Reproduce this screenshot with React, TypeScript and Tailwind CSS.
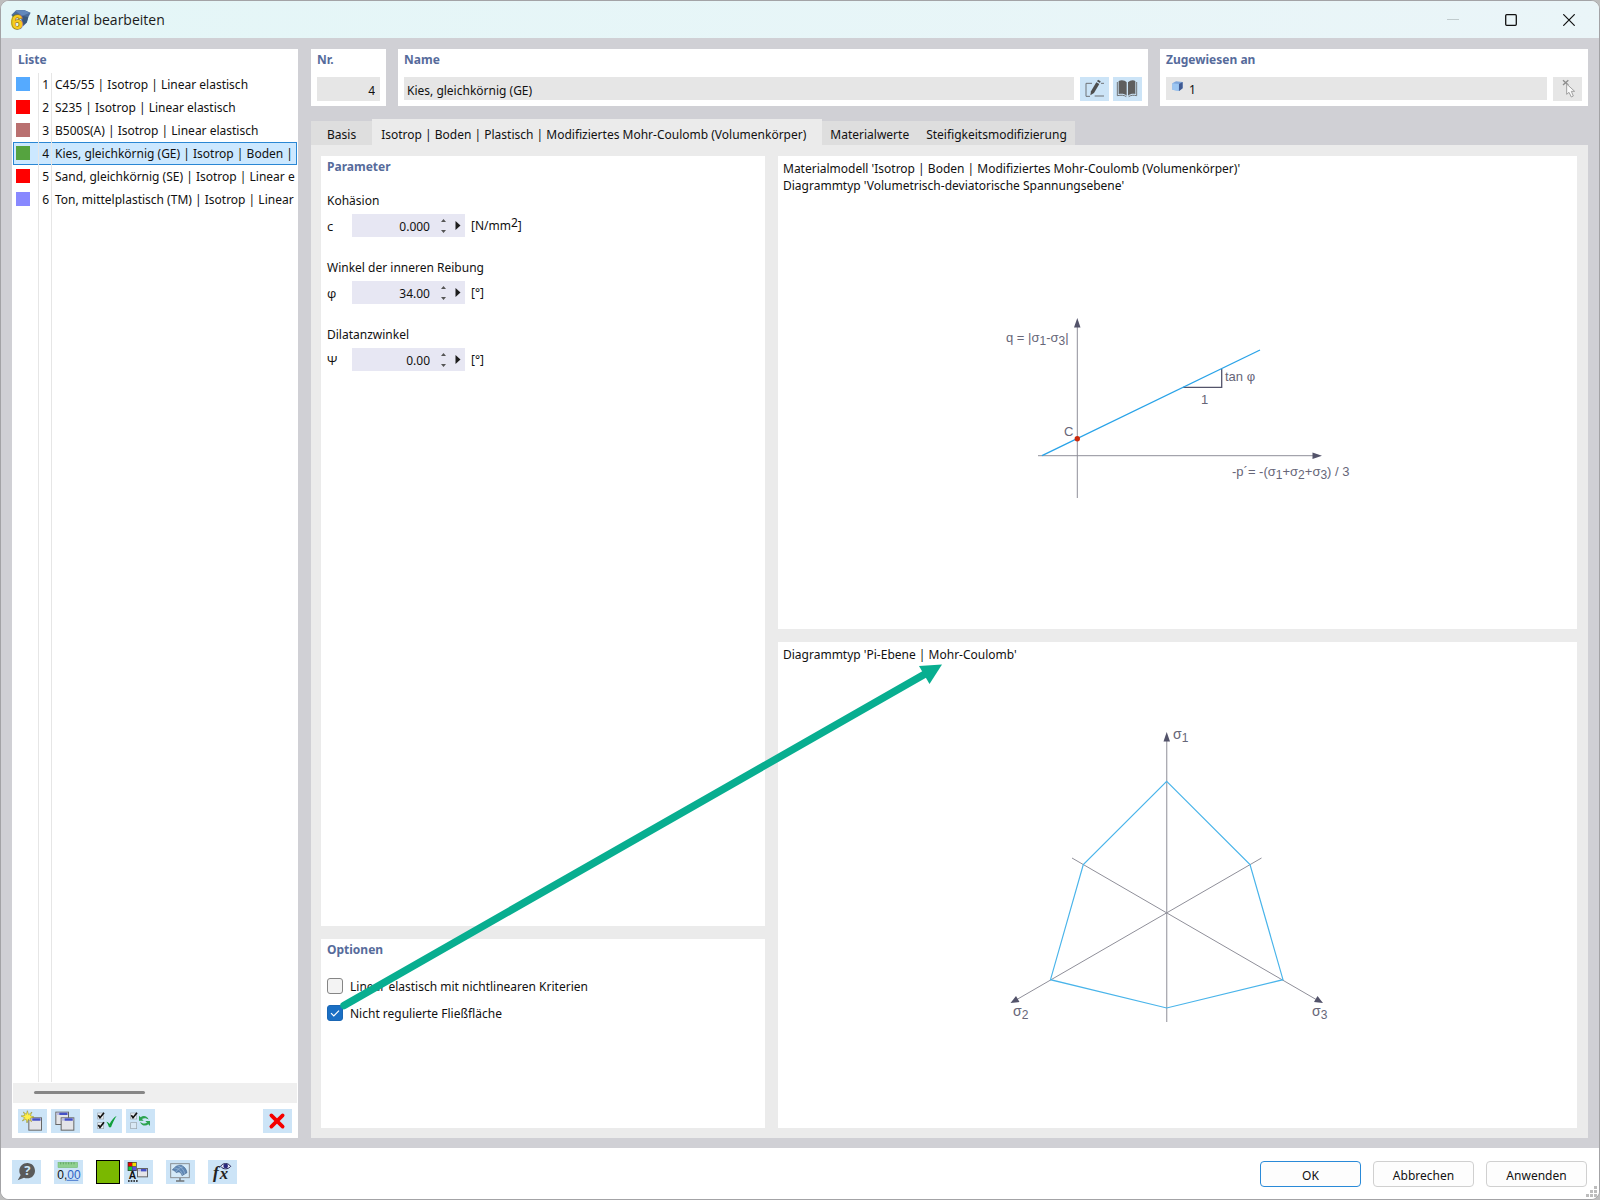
import { useState } from "react";
import type { ReactNode } from "react";
import clsx from "clsx";

const materials = [
  { id: 1, swatch: "bg-[#55aaff]", name: "C45/55 | Isotrop | Linear elastisch" },
  { id: 2, swatch: "bg-[#ff0000]", name: "S235 | Isotrop | Linear elastisch" },
  { id: 3, swatch: "bg-[#b97070]", name: "B500S(A) | Isotrop | Linear elastisch" },
  { id: 4, swatch: "bg-[#55a33f]", name: "Kies, gleichkörnig (GE) | Isotrop | Boden |" },
  { id: 5, swatch: "bg-[#ff0000]", name: "Sand, gleichkörnig (SE) | Isotrop | Linear e" },
  { id: 6, swatch: "bg-[#8888ff]", name: "Ton, mittelplastisch (TM) | Isotrop | Linear" },
];

const tabs = [
  { label: "Basis", className: "px-4" },
  { label: "Isotrop | Boden | Plastisch | Modifiziertes Mohr-Coulomb (Volumenkörper)", className: "pr-4 pl-[9px]" },
  { label: "Materialwerte", className: "px-2" },
  { label: "Steifigkeitsmodifizierung", className: "pr-2 pl-[9px]" },
];

const parameters = [
  { id: "cohesion", title: "Kohäsion", symbol: "c", value: "0.000", unit: <>[N/mm<span className="align-[3px] leading-none">2</span>]</> },
  { id: "friction", title: "Winkel der inneren Reibung", symbol: "φ", value: "34.00", unit: "[°]" },
  { id: "dilatancy", title: "Dilatanzwinkel", symbol: "Ψ", value: "0.00", unit: "[°]" },
];

function Heading({ children }: { children: ReactNode }) {
  return <h2 className="px-[6px] leading-[22px] font-bold text-[#566b9b]">{children}</h2>;
}

function IconButton({ label, disabled, children }: { label: string; disabled?: boolean; children: ReactNode }) {
  return (
    <button
      title={label}
      aria-label={label}
      disabled={disabled}
      className={clsx("h-6 w-[29px] shrink-0", disabled ? "bg-[#e6e6e6]" : "bg-[#cce4f7] hover:bg-[#b8daf5]")}
    >
      <svg viewBox="0 0 87 72" className="block h-6 w-[29px]">{children}</svg>
    </button>
  );
}

// Small window glyph used by several toolbar icons
function MiniWindow({ x, y, w = 41, h = 40 }: { x: number; y: number; w?: number; h?: number }) {
  return (
    <g>
      <rect x={x + 1.5} y={y + 1.5} width={w - 3} height={h - 3} fill="#e4e4e8" stroke="#666" strokeWidth="3" />
      <rect x={x + 3} y={y + 3} width={w - 6} height="7" fill="#b9bce0" />
      <rect x={x + 12} y={y + 3} width={w - 17} height="7" fill="#4450c6" />
    </g>
  );
}

function CheckedBox({ y }: { y: number }) {
  return (
    <g>
      <rect x="14" y={y + 1} width="18" height="18" fill="#e8eef3" stroke="#9aa3aa" strokeWidth="2" />
      <path d={`M16 ${y + 8} L21 ${y + 15} L33 ${y}`} fill="none" stroke="#111" strokeWidth="5" />
    </g>
  );
}

function AppIcon() {
  return (
    <svg viewBox="28 26 62 62" className="h-[21px] w-[21px] overflow-visible">
      <path d="M32 44 L46 30 L70 29 L89 37 L82 50 L78 66 L66 78 L60 52 L38 52 Z" fill="#4a6c9b" />
      <path d="M44 32 L70 29 L86 38 L64 46 Z" fill="#6288bb" />
      <path d="M64 46 L82 50 L77 66 L66 74 Z" fill="#3a5879" />
      <text x="32" y="86" fontSize="62" fontWeight="bold" fill="#f7ca1e" stroke="#8a7326" strokeWidth="4" paintOrder="stroke" className="font-['Liberation_Sans']">6</text>
    </svg>
  );
}

function TitleBar() {
  return (
    <header className="flex h-[37px] items-center gap-[5px] bg-linear-to-r from-[#e4f6f7] to-[#eaf5f8] pr-px pl-[9px] font-['Open_Sans'] text-[14px] text-[#1a1a1a]">
      <AppIcon />
      <h1 className="flex-1">Material bearbeiten</h1>
      <div className="flex">
        <button aria-label="Minimieren" disabled className="flex h-9 w-[58px] items-center justify-center">
          <svg viewBox="0 0 12 12" className="h-3 w-3"><path d="M0 5.5H12" stroke="#c0cbcd" /></svg>
        </button>
        <button aria-label="Maximieren" className="flex h-9 w-[58px] items-center justify-center">
          <svg viewBox="0 0 12 12" className="h-3 w-3"><rect x=".7" y=".7" width="10.6" height="10.6" rx="1" fill="none" stroke="#111" strokeWidth="1.3" /></svg>
        </button>
        <button aria-label="Schließen" className="flex h-9 w-[58px] items-center justify-center">
          <svg viewBox="0 0 12 12" className="h-3 w-3"><path d="M.3 .3 11.7 11.7M11.7 .3 .3 11.7" stroke="#111" strokeWidth="1.2" /></svg>
        </button>
      </div>
    </header>
  );
}

function MaterialList({ selected, onSelect }: { selected: number; onSelect: (id: number) => void }) {
  return (
    <aside className="flex flex-col bg-white">
      <Heading>Liste</Heading>
      <div className="mx-px mt-[2px] flex flex-1 flex-col">
        {materials.map((m) => (
          <button
            key={m.id}
            onClick={() => onSelect(m.id)}
            className={clsx(
              "flex h-[23px] w-full items-stretch border text-left",
              m.id === selected ? "border-[#2a87d4] bg-[#cce8ff]" : "border-transparent"
            )}
          >
            <span className="-my-px flex w-[25px] shrink-0 items-center border-r border-[#e6e6e6] pl-[2px]">
              <span className={clsx("mb-px h-[14px] w-[14px]", m.swatch)} />
            </span>
            <span className="-my-px w-[13px] shrink-0 border-r border-[#e6e6e6] pr-[2px] text-right leading-6">{m.id}</span>
            <span className="-my-px flex-1 overflow-hidden pl-[3px] leading-6 whitespace-nowrap">{m.name}</span>
          </button>
        ))}
        <div className="flex flex-1 pl-px">
          <div className="w-[25px] border-r border-[#e6e6e6]" />
          <div className="w-[13px] border-r border-[#e6e6e6]" />
        </div>
        <div className="mt-px flex h-5 items-center bg-[#efefef] pb-[2px] pl-[21px]">
          <div className="h-[3px] w-[111px] rounded-full bg-[#868686]" />
        </div>
      </div>
      <div className="flex gap-1 px-[6px] pt-[6px] pb-[5px]">
        <IconButton label="Neu">
          <MiniWindow x={31} y={25} />
          <path d="M28 5 L32 17 L42 9 L37 20 L48 24 L36 28 L41 38 L31 31 L27 42 L24 30 L13 36 L20 26 L9 21 L21 19 L16 9 L25 16 Z" fill="#fff04a" stroke="#8c8420" strokeWidth="1.5" />
        </IconButton>
        <IconButton label="Kopieren">
          <MiniWindow x={13} y={8} />
          <MiniWindow x={29} y={25} />
        </IconButton>
        <div className="w-[5px]" />
        <IconButton label="Alle auswählen">
          <CheckedBox y={11} />
          <CheckedBox y={40} />
          <path d="M40 38 C45 39 48 42 50 45 C54 36 60 27 71 20 C64 31 58 43 54 55 L48 55 C46 48 44 43 40 38 Z" fill="#12a03c" />
        </IconButton>
        <IconButton label="Auswahl umkehren">
          <CheckedBox y={11} />
          <rect x="14" y="41" width="18" height="18" fill="#d9e8f4" stroke="#9aa3aa" strokeWidth="2" />
          <path d="M39 20 L39 35 L53 35 L48 30 C54 26 62 27 68 32 C64 21 52 18 44 25 Z" fill="#2da350" />
          <path d="M72 51 L72 36 L58 36 L63 41 C57 45 48 44 42 38 C46 50 59 53 67 46 Z" fill="#2da350" />
        </IconButton>
        <div className="flex-1" />
        <IconButton label="Löschen">
          <path d="M25 19 L59 53 M59 19 L25 53" stroke="#f50000" strokeWidth="11" strokeLinecap="round" />
        </IconButton>
      </div>
    </aside>
  );
}

function HeaderFields() {
  return (
    <div className="flex gap-3">
      <section className="w-[75px] bg-white pb-[5px]">
        <Heading><label htmlFor="nr">Nr.</label></Heading>
        <div className="mt-[6px] flex px-[6px]">
          <input id="nr" readOnly defaultValue="4" className="h-6 w-full bg-[#e6e6e6] pt-[2px] pr-[5px] text-right outline-none" />
        </div>
      </section>
      <section className="min-w-0 flex-[750] bg-white pb-[5px]">
        <Heading><label htmlFor="name">Name</label></Heading>
        <div className="mt-[6px] flex gap-1 px-[6px]">
          <input id="name" readOnly defaultValue="Kies, gleichkörnig (GE)" className="mr-[2px] h-[23px] min-w-0 flex-1 bg-[#e6e6e6] pt-[3px] pl-[3px] outline-none" />
          <IconButton label="Bearbeiten">
            <path d="M36 19 H18 V58 H30" fill="none" stroke="#6f7377" strokeWidth="3" />
            <path d="M63 19 H72 M44 57 H72" stroke="#6f7377" strokeWidth="3" />
            <path d="M31 55 L33 43 L49 16 L58 21 L42 48 Z" fill="#4e4e4e" />
            <path d="M51 13 L54 8 L62 13 L60 18 Z" fill="#4e4e4e" />
          </IconButton>
          <IconButton label="Bibliothek">
            <path d="M17 12 C26 8 36 10 41 16 V56 C35 50 26 49 17 51 Z M45 16 C51 10 60 8 67 12 V51 C60 49 52 50 45 56 Z" fill="#5e5e5e" />
            <path d="M13 15 V56 C24 54 33 54 40 59 M71 15 V56 C62 54 54 54 47 59" fill="none" stroke="#5e5e5e" strokeWidth="2.500" />
          </IconButton>
        </div>
      </section>
      <section className="min-w-0 flex-[428] bg-white pb-[5px]">
        <Heading><label htmlFor="assigned">Zugewiesen an</label></Heading>
        <div className="mt-[6px] flex gap-[6px] px-[6px]">
          <div className="flex h-[23px] min-w-0 flex-1 bg-[#e6e6e6] pl-[6px]">
            <svg viewBox="0 0 30 30" className="mt-[4px] h-[11px] w-[11px]">
              <path d="M1 6 L11 1 L29 3 L29 20 L20 27 L1 24 Z" fill="#7ea6da" />
              <path d="M1 6 L19 8 V27 L1 24 Z" fill="#9cc6f2" />
              <path d="M19 8 L29 3 V20 L19 27 Z" fill="#405a92" />
            </svg>
            <input id="assigned" readOnly defaultValue="1" className="min-w-0 flex-1 pt-[3px] pl-[6px] outline-none" />
          </div>
          <IconButton label="Auswahl" disabled>
            <path d="M30 10 L46 24 M46 10 L30 24" stroke="#8d8d8d" strokeWidth="4" />
            <path d="M41 21 V52 L48 46 L55 60 L61 57 L55 43 L65 43 Z" fill="#fafafa" stroke="#a0a0a0" strokeWidth="3" />
          </IconButton>
        </div>
      </section>
    </div>
  );
}

function ParameterPanel() {
  return (
    <section className="bg-white">
      <Heading>Parameter</Heading>
      <div className="mt-3 flex flex-col gap-5 px-[6px]">
        {parameters.map((p) => (
          <div key={p.id}>
            <label htmlFor={p.id} className="block leading-[22px]">{p.title}</label>
            <div className="mt-[2px] flex h-[23px]">
              <span className="w-[25px] font-['Open_Sans'] text-[13px] leading-6">{p.symbol}</span>
              <div className="flex h-[23px] w-[113px] items-center bg-[#e7e7f3]">
                <input id={p.id} defaultValue={p.value} className="h-full w-[78px] pt-[2px] text-right outline-none" />
                <svg viewBox="0 0 35 23" className="h-[23px] w-[35px]">
                  <path d="M11 8 L13.500 5 L16 8 Z M11 16 L13.500 19 L16 16 Z" fill="#555" />
                  <path d="M25.500 7 L30.500 11.500 L25.500 16 Z" fill="#1d1d1d" />
                </svg>
              </div>
              <span className="ml-[6px] leading-6">{p.unit}</span>
            </div>
          </div>
        ))}
      </div>
    </section>
  );
}

function Option({ id, label, checked }: { id: string; label: string; checked?: boolean }) {
  return (
    <div className="flex h-[27px] items-center gap-[7px]">
      <span className="relative h-4 w-4">
        <input
          id={id}
          type="checkbox"
          defaultChecked={checked}
          className="peer block h-4 w-4 appearance-none rounded-[3px] border border-[#858585] bg-[#f3f3f3] checked:border-[#1a66b4] checked:bg-[#1a6fc4]"
        />
        <svg viewBox="0 0 16 16" className="pointer-events-none absolute inset-0 hidden h-4 w-4 peer-checked:block">
          <path d="M4 8.200 L6.800 11 L12 5.600" fill="none" stroke="#fff" strokeWidth="1.200" />
        </svg>
      </span>
      <label htmlFor={id} className="pt-[2px]">{label}</label>
    </div>
  );
}

function OptionsPanel() {
  return (
    <section className="bg-white">
      <Heading>Optionen</Heading>
      <div className="mt-[11px] px-[6px]">
        <Option id="linear" label="Linear elastisch mit nichtlinearen Kriterien" />
        <Option id="unregulated" label="Nicht regulierte Fließfläche" checked />
      </div>
    </section>
  );
}

// σ with an index; text after it goes back up to the baseline
function Sigma({ n, after }: { n: number; after?: string }) {
  return (
    <>
      σ<tspan dy="3" fontSize="12">{n}</tspan>
      {after && <tspan dy="-3">{after}</tspan>}
    </>
  );
}

function StressPlaneDiagram() {
  return (
    <svg viewBox="978 312 400 200" className="h-[200px] w-[400px] font-['Liberation_Sans'] text-[13px]" fill="#666678">
      <path d="M1077.300 325 V498 M1038 455.700 H1314" stroke="#8f8f99" />
      <path d="M1077.300 318 L1080.500 327.500 H1074 Z M1322 455.700 L1312.500 452.500 V459 Z" fill="#53536a" />
      <path d="M1183 387.300 H1221.700 V369" fill="none" stroke="#53536a" strokeWidth="1.300" />
      <path d="M1042 455.700 L1260 350" stroke="#29a3e8" strokeWidth="1.300" />
      <circle cx="1077.300" cy="438.700" r="2.700" fill="#cc2a0c" />
      <text x="1006" y="342">q = |<Sigma n={1} after="-" /><Sigma n={3} after="|" /></text>
      <text x="1064" y="436">C</text>
      <text x="1225" y="381">tan φ</text>
      <text x="1201" y="404">1</text>
      <text x="1232" y="476">-p´= -(<Sigma n={1} after="+" /><Sigma n={2} after="+" /><Sigma n={3} after=") / 3" /></text>
    </svg>
  );
}

function PiPlaneDiagram() {
  return (
    <svg viewBox="978 716 400 360" className="h-[360px] w-[400px] font-['Liberation_Sans'] text-[14px]" fill="#666678">
      <path d="M1166.700 738 V1022" stroke="#a8a8b0" strokeWidth="1.300" />
      <path d="M1261.500 858 L1016 1000 M1072 858 L1317 1000" stroke="#8f8f99" />
      <path d="M1166.700 732 L1170 741.500 H1163.500 Z M1010.500 1003 L1016 996 L1019.500 1002 Z M1323 1003 L1317.500 996 L1314 1002 Z" fill="#53536a" />
      <path d="M1166.700 781.300 L1250 864.500 L1283 979.700 L1166.700 1008 L1050.500 979.700 L1083.300 864.500 Z" fill="none" stroke="#49b4ea" strokeWidth="1.200" />
      <text x="1173" y="739"><Sigma n={1} /></text>
      <text x="1013" y="1016"><Sigma n={2} /></text>
      <text x="1312" y="1016"><Sigma n={3} /></text>
    </svg>
  );
}

function DiagramPanel({ lines, children }: { lines: string[]; children: ReactNode }) {
  return (
    <section className="flex flex-col bg-white">
      <div className="px-[5px] pt-1">
        {lines.map((line) => (
          <p key={line} className="leading-[17px]">{line}</p>
        ))}
      </div>
      <div className="flex flex-1 items-center justify-center">{children}</div>
    </section>
  );
}

function Footer() {
  return (
    <footer className="relative flex h-[51px] items-start bg-white pt-3 pr-3 pl-[11px]">
      <div className="flex flex-1 gap-[13px]">
        <IconButton label="Hilfe">
          <path d="M46 9 C60 9 69 20 69 32 C69 45 59 55 46 55 C42 55 39 54 36 53 L17 61 L26 45 C23 41 22 37 22 32 C22 19 33 9 46 9 Z" fill="#5a5a5a" />
          <text x="46" y="46" textAnchor="middle" fontSize="39" fontWeight="bold" fill="#cce4f7">?</text>
        </IconButton>
        <IconButton label="Einheiten">
          <rect x="12" y="7" width="59" height="16" fill="#8fd08f" stroke="#6cb56c" strokeWidth="1.500" />
          <path d="M20 7 V13 M28 7 V13 M36 7 V13 M44 7 V13 M52 7 V13 M60 7 V13" stroke="#4c8f4c" strokeWidth="2" />
          <text x="10" y="56" fontSize="36" fill="#111" className="font-['Liberation_Sans']">0,<tspan fill="#2d62c4">00</tspan></text>
          <path d="M38 61 H73" stroke="#2d62c4" strokeWidth="2.500" />
        </IconButton>
        <div className="flex gap-1">
          <button aria-label="Farbe" className="h-6 w-6 border border-black bg-[#7ab800]" />
          <IconButton label="Darstellung">
            <rect x="11" y="6" width="27" height="27" fill="#333" />
            <rect x="13" y="8" width="11" height="11" fill="#e00" />
            <rect x="25" y="8" width="11" height="11" fill="#f5dc00" />
            <rect x="13" y="20" width="11" height="11" fill="#12c83c" />
            <rect x="25" y="20" width="11" height="11" fill="#5a4de0" />
            <text x="14" y="58" fontSize="31" fontWeight="bold" fill="#111" className="font-['Liberation_Sans']">A</text>
            <path d="M12 63 H42" stroke="#111" strokeWidth="4" strokeDasharray="5 3" />
            <MiniWindow x={39} y={24} w={33} h={28} />
          </IconButton>
        </div>
        <IconButton label="Anzeige">
          <rect x="14" y="11" width="56" height="42" fill="#d4e9f8" stroke="#8a8f94" strokeWidth="3" />
          <path d="M42 54 V62 M30 63 H55" stroke="#6f7377" strokeWidth="4" />
          <path d="M19 30 C27 19 36 14 46 16 C56 20 62 29 63 38 L48 47 C46 38 40 33 31 38 C28 34 24 31 19 30 Z" fill="#5f87b5" stroke="#36567c" strokeWidth="1.500" />
          <path d="M24 24 C36 24 46 32 50 46 M34 17 C46 20 54 30 57 43 M30 36 C34 28 42 22 52 20" fill="none" stroke="#b7cfe6" strokeWidth="1.500" />
        </IconButton>
        <IconButton label="Formel">
          <text x="15" y="55" fontSize="52" fontStyle="italic" fontWeight="bold" fill="#222" className="font-['Liberation_Serif']">f</text>
          <text x="35" y="58" fontSize="50" fontStyle="italic" fontWeight="bold" fill="#222" className="font-['Liberation_Serif']">x</text>
          <path d="M38 19 C44 8 61 8 68 19 C61 29 45 29 38 19 Z" fill="#e8e8f8" stroke="#1d1d50" strokeWidth="3" />
          <circle cx="53" cy="18" r="7" fill="#28287c" />
        </IconButton>
      </div>
      <div className="flex gap-3 pt-px">
        <button className="h-[26px] w-[101px] rounded-[4px] border border-[#2a8ad8] bg-[#fdfdfd] pt-[3px]">OK</button>
        <button className="h-[26px] w-[101px] rounded-[4px] border border-[#d0d0d0] bg-[#fdfdfd] pt-[3px]">Abbrechen</button>
        <button className="h-[26px] w-[101px] rounded-[4px] border border-[#d0d0d0] bg-[#fdfdfd] pt-[3px]">Anwenden</button>
      </div>
      <svg viewBox="0 0 11 11" className="absolute right-[2px] bottom-[2px] h-[11px] w-[11px]" fill="#bdbdbd">
        <path d="M8 0h3v3h-3z M4 4h3v3h-3z M8 4h3v3h-3z M0 8h3v3h-3z M4 8h3v3h-3z M8 8h3v3h-3z" />
      </svg>
    </footer>
  );
}

export default function App() {
  const [selected, setSelected] = useState(4);
  const [activeTab, setActiveTab] = useState(1);

  return (
    <div className="min-h-screen bg-[#bdbdbd] font-['Noto_Sans','Open_Sans',sans-serif] text-[12px] text-[#111]">
      <div className="relative flex min-h-screen flex-col overflow-hidden rounded-[9px] border border-[#a3a3a6] bg-white">
        <TitleBar />
        <main className="grid flex-1 grid-cols-[286px_1fr] gap-[13px] bg-[#d0d0d5] px-[11px] pt-[11px] pb-[10px]">
          <MaterialList selected={selected} onSelect={setSelected} />
          <div className="flex min-w-0 flex-col">
            <HeaderFields />
            <div role="tablist" className="mt-[13px] flex h-[26px] items-end">
              {tabs.map((tab, i) => (
                <button
                  key={tab.label}
                  role="tab"
                  aria-selected={i === activeTab}
                  onClick={() => setActiveTab(i)}
                  className={clsx(
                    "whitespace-nowrap",
                    i === activeTab ? "h-[26px] bg-[#ebebeb] pt-[5px]" : "h-6 bg-[#dedede] pt-[3px]",
                    tab.className
                  )}
                >
                  {tab.label}
                </button>
              ))}
            </div>
            <div className="grid flex-1 grid-cols-[444fr_799fr] gap-[13px] bg-[#ebebeb] pt-[11px] pr-[11px] pb-[10px] pl-[10px]">
              <div className="grid grid-rows-[770fr_189fr] gap-[13px]">
                <ParameterPanel />
                <OptionsPanel />
              </div>
              <div className="grid grid-rows-[473fr_486fr] gap-[13px]">
                <DiagramPanel
                  lines={[
                    "Materialmodell 'Isotrop | Boden | Modifiziertes Mohr-Coulomb (Volumenkörper)'",
                    "Diagrammtyp 'Volumetrisch-deviatorische Spannungsebene'",
                  ]}
                >
                  <StressPlaneDiagram />
                </DiagramPanel>
                <DiagramPanel lines={["Diagrammtyp 'Pi-Ebene | Mohr-Coulomb'"]}>
                  <PiPlaneDiagram />
                </DiagramPanel>
              </div>
            </div>
          </div>
        </main>
        <Footer />
        {/* Callout from the option to the diagram it changes */}
        <svg viewBox="1 1 1598 1198" preserveAspectRatio="none" className="pointer-events-none absolute inset-0 h-full w-full">
          <path d="M344 1005.500 L925 674" stroke="#08ae90" strokeWidth="7.500" strokeLinecap="round" />
          <path d="M942 664.500 L919 666 L929.500 684 Z" fill="#08ae90" />
        </svg>
      </div>
    </div>
  );
}
